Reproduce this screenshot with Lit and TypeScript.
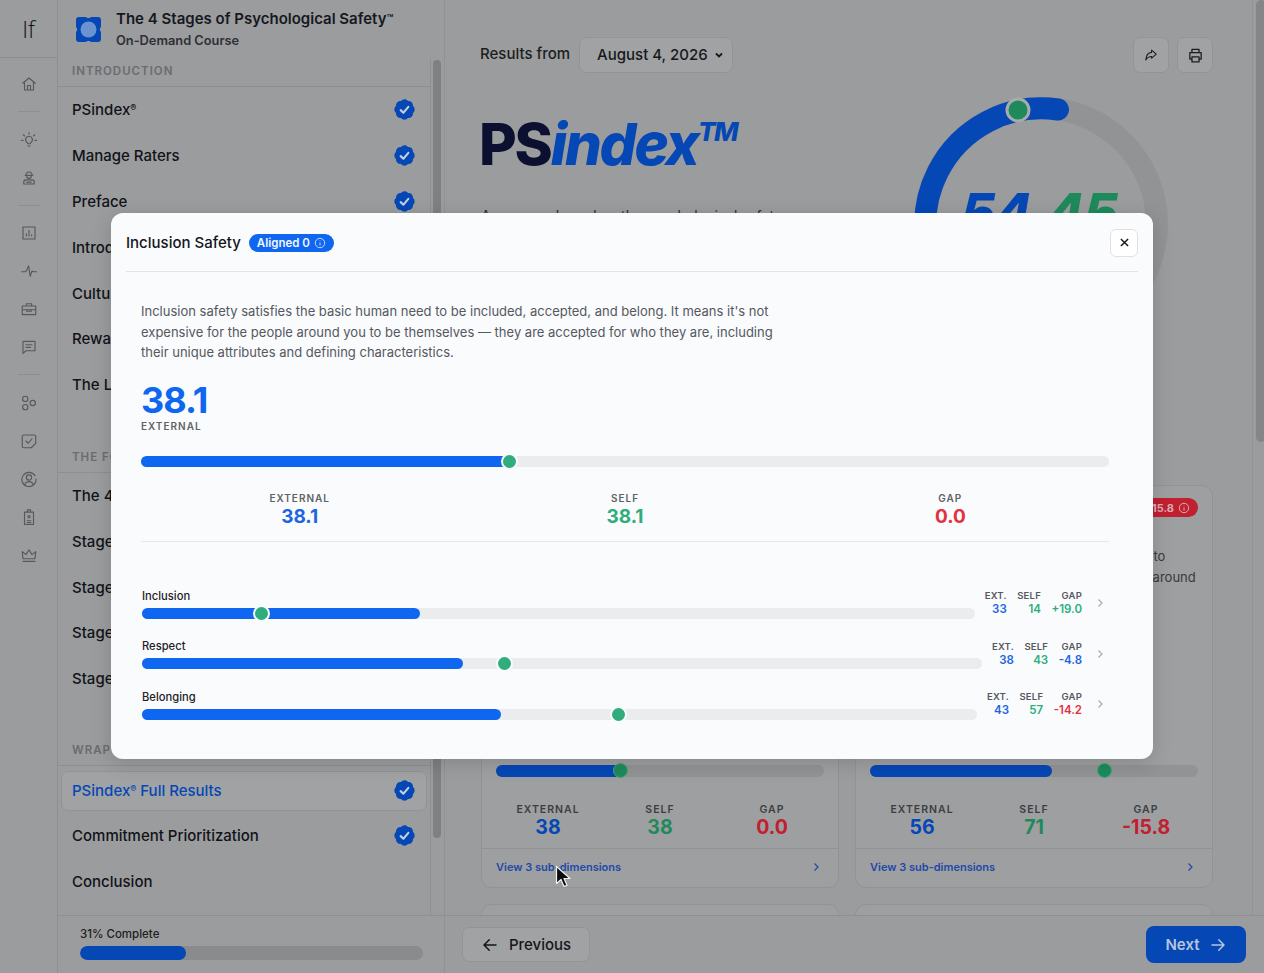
import { LitElement, html, css } from "lit";
import { customElement } from "lit/decorators.js";

const check = html`<svg class="check" viewBox="0 0 24 24"><path fill="#0547b5" d="M8.603 3.799A4.49 4.49 0 0 1 12 2.25c1.357 0 2.573.6 3.397 1.549a4.49 4.49 0 0 1 3.498 1.307 4.491 4.491 0 0 1 1.307 3.497A4.49 4.49 0 0 1 21.75 12a4.49 4.49 0 0 1-1.549 3.397 4.491 4.491 0 0 1-1.307 3.497 4.491 4.491 0 0 1-3.497 1.307A4.49 4.49 0 0 1 12 21.75a4.49 4.49 0 0 1-3.397-1.549 4.49 4.49 0 0 1-3.498-1.306 4.491 4.491 0 0 1-1.307-3.498A4.49 4.49 0 0 1 2.25 12c0-1.357.6-2.573 1.549-3.397a4.49 4.49 0 0 1 1.307-3.497 4.49 4.49 0 0 1 3.497-1.307Z"/><path fill="none" stroke="#c4cfe0" stroke-width="2" stroke-linecap="round" stroke-linejoin="round" d="M8.3 12.6l2.6 2.5 4.8-5.6"/></svg>`;

const railIcons: Record<string, string> = {
  home: "M3.5 11 12 4l8.5 7M6 9.5V20h12V9.5M10 20v-6h4v6",
  bulb: "M12 7a4.5 4.5 0 0 0-2.6 8.2c.6.5.9 1 .9 1.8h3.4c0-.8.3-1.300.9-1.800A4.500 4.500 0 0 0 12 7zM10.500 20h3M12 2v2M4.500 5l1.500 1.500M19.500 5 18 6.500M2 12.500h2M20 12.500h2",
  hat: "M8 8.500c0-2.500 1.800-4.500 4-4.500s4 2 4 4.500M7 8.500h10M9 9c0 2 1.300 3.500 3 3.500s3-1.500 3-3.500M5 20v-2.500c0-1.500 1.500-3 3-3h8c1.500 0 3 1.500 3 3V20zM9 17.500h6",
  chart: "M4 4h16v16H4zM8.500 16v-3M12 16V8.500M15.500 16v-1.500",
  pulse: "M2 13h5l2-2 2.500-6 2 14 2.500-7 1.500 1H22",
  brief: "M3 8h18v11.500H3zM8.500 8V5h7v3M3 13h18M9 13v2h6v-2",
  msg: "M4 4.500h16v12.500H8l-4 3.500zM8 9h8M8 12.500h6",
  shapes: "M10.500 6.500a3.500 3.500 0 1 1-7 0 3.500 3.500 0 0 1 7 0zM10.500 17.500a3.500 3.500 0 1 1-7 0 3.500 3.500 0 0 1 7 0zM20.500 12a3.500 3.500 0 1 1-7 0 3.500 3.500 0 0 1 7 0z",
  task: "M5 4h14a2 2 0 0 1 2 2v9l-6 6H5a2 2 0 0 1-2-2V6a2 2 0 0 1 2-2zM8 12l3 3 5-6",
  user: "M20 7.500A9.500 9.500 0 1 0 21.500 12M15.500 10a3.500 3.500 0 1 1-7 0 3.500 3.500 0 0 1 7 0zM6.500 19c1-2.500 3-3.500 5.500-3.500s4.500 1 5.500 3.500",
  badge: "M6 5.500h12V22H6zM10 5.500V2.500h4v3M12 10a1.500 1.500 0 1 0 0 3 1.500 1.500 0 0 0 0-3zM9.500 17h5M9.500 19.500h5",
  crown: "M4 17 3 7.500l5 4 4-6.500 4 6.500 5-4-1 9.500zM4 20.500h16",
};

const ic = (n: string) => html`<svg class="ri" viewBox="0 0 24 24"><path d=${railIcons[n]}/></svg>`;
const chev = html`<svg class="chev" viewBox="0 0 10 10"><path d="M3.500 1.500 7 5 3.500 8.500"/></svg>`;
const info = html`<svg class="info" viewBox="0 0 12 12"><circle cx="6" cy="6" r="4.700"/><path d="M6 5.500v3M6 3.400v.5"/></svg>`;
const reg = html`<span class="reg">®</span>`;

const items = (list: unknown[], done: number) =>
  list.map((t, i) => html`<div class="item"><span>${t}</span>${i < done ? check : ""}</div>`);

@customElement("app-root")
export class AppRoot extends LitElement {
  static styles = css`
    :host { display: block; width: 1264px; height: 973px; overflow: hidden; position: relative; background: #9b9c9d; font-family: Inter, "Liberation Sans", sans-serif; color: #14161c; }
    .app { display: flex; width: 100%; height: 100%; }
    .rail { width: 58px; flex: none; border-right: 1px solid #8e8f90; box-sizing: border-box; display: flex; flex-direction: column; align-items: center; }
    .logo { height: 58px; width: 100%; box-sizing: border-box; border-bottom: 1px solid #8e8f90; display: flex; align-items: center; justify-content: center; font-size: 23px; font-weight: 300; color: #111318; font-family: "Open Sans", sans-serif; margin-bottom: 7px; }
    .rbtn { height: 38px; flex: none; display: flex; align-items: center; justify-content: center; }
    .ri { width: 18px; height: 18px; fill: none; stroke: #55585c; stroke-width: 1.500; stroke-linejoin: round; stroke-linecap: round; }
    .rsep { width: 22px; height: 1px; background: #8e8f90; margin: 8px 0 8.500px; flex: none; }

    .side { width: 386px; flex: none; display: flex; flex-direction: column; height: 100%; }
    .sidetop { height: 59px; flex: none; display: flex; align-items: center; padding-left: 18px; gap: 15px; }
    .clogo { width: 25px; height: 25px; flex: none; }
    .ctitle { font-size: 15px; font-weight: 600; line-height: 20px; margin-top: -3px; color: #16181f; white-space: nowrap; }
    .tm { font-size: 11px; vertical-align: 2px; }
    .csub { font-size: 12.800px; font-weight: 600; line-height: 16px; margin-top: 4px; color: #2e3035; }
    .reg { font-size: 9px; vertical-align: 4px; line-height: 0; }
    .sidemid { flex: 1; display: flex; min-height: 0; }
    .list { width: 372px; flex: none; border-right: 1px solid #8e8f90; overflow: hidden; }
    .gutter { flex: 1; padding: 1px 3px 0 2px; }
    .sthumb { height: 778px; background: #7f8081; border-radius: 4px; }
    .sec { height: 28px; box-sizing: border-box; border-bottom: 1px solid #8e8f90; padding-left: 14px; font-size: 11.500px; font-weight: 600; letter-spacing: 1px; color: #6a6c70; line-height: 24px; }
    .group { margin-bottom: 37px; }
    .group + .group { margin-bottom: 36px; }
    .item { height: 45.800px; display: flex; align-items: center; justify-content: space-between; padding: 0 14px; font-size: 15px; font-weight: 500; color: #111319; box-sizing: border-box; }
    .activewrap { margin: 5px 3px 2.500px; padding: 0 10px; height: 40px; border: 1px solid #929394; background: #a1a2a3; border-radius: 7px; box-sizing: border-box; display: flex; align-items: center; justify-content: space-between; font-size: 15px; font-weight: 500; color: #0547b5; }
    .check { width: 25px; height: 25px; flex: none; margin-right: -1px; }
    .sidefoot { height: 58px; flex: none; border-top: 1px solid #8e8f90; box-sizing: border-box; padding: 10px 21px 0 22px; }
    .pl { font-size: 11.500px; font-weight: 500; color: #1c1e23; line-height: 16px; }
    .ptrack { height: 14px; margin-top: 4px; border-radius: 7px; background: #8a8b8c; overflow: hidden; }
    .pfill { height: 100%; width: 31%; background: #0547b5; border-radius: 7px; }

    .main { flex: 1; display: flex; flex-direction: column; border-left: 1px solid #919293; box-sizing: border-box; min-width: 0; }
    .mid { flex: 1; display: flex; min-height: 0; }
    .scroll { width: 807px; flex: none; padding: 37px 39px 0 36px; box-sizing: border-box; overflow: hidden; }
    .mgut { flex: 1; padding-left: 1px; border-left: 1px solid #939495; }
    .mthumb { width: 10px; height: 442px; background: #858687; border-radius: 5px; margin-left: 2px; }
    .head { display: flex; align-items: center; height: 36px; }
    .rf { font-size: 15px; font-weight: 500; color: #1b1d22; margin: -4px 9px 0 -1px; white-space: nowrap; }
    .sel { display: flex; align-items: center; width: 154px; height: 36px; box-sizing: border-box; padding: 0 8px 2px 17px; justify-content: space-between; font-size: 15px; font-weight: 500; border: 1px solid #939495; background: #a1a2a3; border-radius: 7px; color: #16181d; white-space: nowrap; }
    .sel svg { width: 10px; height: 10px; fill: none; stroke: #16181d; stroke-width: 1.800; margin-top: 2px; }
    .spacer { flex: 1; }
    .ibtn { width: 36px; height: 36px; box-sizing: border-box; border: 1px solid #939495; background: #a1a2a3; border-radius: 7px; margin-left: 8px; display: flex; align-items: center; justify-content: center; }
    .ibtn svg { width: 17px; height: 17px; fill: none; stroke: #1a1c20; stroke-width: 1.800; stroke-linejoin: round; stroke-linecap: round; }
    .ibtn svg.sm { width: 14px; height: 14px; }
    .hero { height: 412px; position: relative; }
    .brand { margin: 0 0 0 -2px; padding-top: 36px; font-size: 58px; line-height: 70px; font-weight: 800; letter-spacing: -2.200px; color: #0b1030; white-space: nowrap; }
    .brand i { color: #0547b5; font-weight: 800; }
    .brand sup { font-size: 26px; line-height: 0; font-style: italic; font-weight: 800; color: #0547b5; vertical-align: 24px; letter-spacing: -1.500px; }
    .lede { font-size: 14px; color: #2a2c30; margin: 27px 0 0 0; line-height: 20px; width: 310px; }
    .gauge { position: absolute; left: 430px; top: 21px; width: 260px; height: 260px; }
    .gauge svg { width: 260px; height: 260px; display: block; }
    .gnum { position: absolute; left: -2px; width: 100%; top: 89px; text-align: center; font-size: 54px; line-height: 60px; font-weight: 800; font-style: italic; letter-spacing: -1px; }
    .gnum b { color: #0547b5; font-weight: 800; }
    .gnum u { color: #1e8a5c; text-decoration: none; }
    .cards { display: grid; grid-template-columns: 358px 358px; gap: 16px; }
    .card { height: 403px; box-sizing: border-box; border: 1px solid #929394; border-radius: 11px; display: flex; flex-direction: column; background: #9e9fa0; }
    .chead { height: 60px; flex: none; display: flex; justify-content: flex-end; align-items: flex-start; padding: 12px 14px 0; box-sizing: border-box; }
    .cbadge { display: flex; align-items: center; gap: 4px; height: 19px; border-radius: 10px; background: #c0202f; color: #d9aeb3; font-size: 11px; font-weight: 700; padding: 0 8px; white-space: nowrap; }
    .cbadge .info { stroke: #d9aeb3; }
    .cbody { font-size: 13px; line-height: 20.500px; color: #383a3e; padding: 0 14px; white-space: nowrap; }
    .cgrow { flex: 1; }
    .cbar { position: relative; height: 12px; background: #929394; border-radius: 6px; margin: 0 14px; }
    .cfill { height: 100%; background: #0547b5; border-radius: 6px; }
    .cdot { position: absolute; top: 50%; width: 13px; height: 13px; margin: -8px 0 0 -8px; border: 1.500px solid #4aa57f; border-radius: 50%; background: #1e8a5c; }
    .cstats { display: grid; grid-template-columns: repeat(3, 1fr); text-align: center; margin: 27px 10px 10px; }
    .cstats label { display: block; font-size: 10.500px; font-weight: 600; letter-spacing: 1px; color: #3c3e42; line-height: 12px; }
    .cstats div div { font-size: 19.500px; font-weight: 700; line-height: 22px; }
    .b { color: #0547b5; } .g { color: #1e8a5c; } .r { color: #c0202f; }
    .cfoot { border-top: 1px solid #919293; height: 39px; box-sizing: border-box; display: flex; align-items: center; justify-content: space-between; padding: 0 17px 2px 14px; font-size: 11px; font-weight: 600; color: #1f4aa8; }
    .cfoot .chev { stroke: #1f4aa8; }
    .mfoot { height: 58px; flex: none; border-top: 1px solid #8e8f90; box-sizing: border-box; display: flex; align-items: center; justify-content: space-between; padding: 0 18px 0 17px; }
    .prev { height: 35px; width: 128px; box-sizing: border-box; border: 1px solid #939495; background: #a1a2a3; border-radius: 7px; display: flex; align-items: center; justify-content: center; gap: 10px; font-size: 15px; font-weight: 500; color: #14161c; }
    .next { height: 37px; width: 100px; box-sizing: border-box; background: #0547b5; border-radius: 8px; display: flex; align-items: center; justify-content: center; gap: 9px; font-size: 15px; font-weight: 600; color: #b6c5dd; }
    .prev svg, .next svg { width: 18px; height: 18px; fill: none; stroke: currentColor; stroke-width: 2; stroke-linecap: round; stroke-linejoin: round; }

    .modal { position: absolute; left: 111px; top: 213px; width: 1042px; height: 546px; box-sizing: border-box; padding: 0 15px; background: #f9fbfd; border-radius: 12px; box-shadow: 0 4px 20px rgba(0,0,0,.15); display: flex; flex-direction: column; }
    .mhead { height: 59px; flex: none; box-sizing: border-box; border-bottom: 1px solid #e2e4e8; display: flex; align-items: center; gap: 8px; padding-top: 1px; }
    .mtitle { font-size: 15px; font-weight: 500; color: #14161c; }
    .mbadge { height: 18px; display: flex; align-items: center; gap: 4px; padding: 0 8px; border-radius: 9px; background: #0f66f0; color: #f2f6fe; font-size: 11.500px; font-weight: 600; }
    .info { width: 12px; height: 12px; fill: none; stroke: #c3d8fb; stroke-width: 1; flex: none; }
    .close { margin-left: auto; width: 28px; height: 28px; box-sizing: border-box; border: 1px solid #dfe1e5; border-radius: 6px; background: #fff; display: flex; align-items: center; justify-content: center; }
    .close svg { width: 9px; height: 9px; stroke: #14161c; stroke-width: 1.600; fill: none; }
    .mbody { padding: 0 29px 0 15px; flex: 1; min-height: 0; }
    .desc { margin: 29px 0 0; width: 645px; font-size: 13px; line-height: 20.500px; color: #55585d; }
    .big { font-size: 36px; line-height: 40px; font-weight: 700; color: #0f66f0; margin-top: 17.500px; letter-spacing: -1px; }
    .biglab { font-size: 10px; font-weight: 600; letter-spacing: 1px; color: #606266; line-height: 13px; }
    .bar { position: relative; height: 11px; border-radius: 6px; background: #ebecee; }
    .bar.mainbar { margin-top: 23px; }
    .fill { height: 100%; border-radius: 6px; background: #0f66f0; }
    .dot { position: absolute; top: 50%; width: 13px; height: 13px; margin: -8.500px 0 0 -8.500px; border-radius: 50%; background: #2fad7c; border: 2px solid #f9fbfd; }
    .stats { display: grid; grid-template-columns: repeat(3, 1fr); gap: 8px; text-align: center; margin-top: 25px; padding-bottom: 13px; border-bottom: 1px solid #e6e7ea; }
    .stats label { display: block; font-size: 10px; font-weight: 600; letter-spacing: 1px; color: #606266; line-height: 13px; }
    .stats div div { font-size: 19px; font-weight: 700; line-height: 23px; }
    .mb { color: #1e66e0; } .mg { color: #2fad7c; } .mr { color: #e3323f; }
    .subs { margin-top: 41px; display: flex; flex-direction: column; gap: 10.500px; padding: 0 4px 0 1px; }
    .sub { display: flex; align-items: center; height: 40.200px; }
    .subl { flex: 1; min-width: 0; }
    .subn { font-size: 11.200px; font-weight: 500; line-height: 16px; color: #1f2126; margin-bottom: 4px; }
    .sstats { display: flex; gap: 10.500px; margin-left: 10px; text-align: right; }
    .sstats label { display: block; font-size: 9.500px; font-weight: 600; color: #55585d; line-height: 13px; letter-spacing: 0.2px; }
    .sstats div div { font-size: 11.500px; font-weight: 600; line-height: 15px; }
    .chev { width: 10px; height: 10px; fill: none; stroke: #a9abaf; stroke-width: 1.200; flex: none; }
    .sub > .chev { margin-left: 13px; }
    .cursor { position: absolute; left: 555px; top: 865px; width: 16px; height: 24px; }
  `;

  sub(name: string, ext: number, self: number, gap: string, gc: string, fp: number, dp: number) {
    return html`<div class="sub">
      <div class="subl">
        <div class="subn">${name}</div>
        <div class="bar"><div class="fill" style="width:${fp}%"></div><div class="dot" style="left:${dp}%"></div></div>
      </div>
      <div class="sstats">
        <div><label>EXT.</label><div class="mb">${ext}</div></div>
        <div><label>SELF</label><div class="mg">${self}</div></div>
        <div><label>GAP</label><div class=${gc}>${gap}</div></div>
      </div>
      ${chev}
    </div>`;
  }

  card(ext: string, self: string, gap: string, fp: number, dp: number, badge: boolean) {
    return html`<div class="card">
      <div class="chead">${badge ? html`<div class="cbadge">Misaligned -15.8 ${info}</div>` : html`<div></div>`}</div>
      <div class="cbody">${badge ? html`Contribution safety fits the basic human need to<br />contribute and make a difference for all those around` : ""}</div>
      <div class="cgrow"></div>
      <div class="cbar"><div class="cfill" style="width:${fp}%"></div><div class="cdot" style="left:${dp}%"></div></div>
      <div class="cstats">
        <div><label>EXTERNAL</label><div class="b">${ext}</div></div>
        <div><label>SELF</label><div class="g">${self}</div></div>
        <div><label>GAP</label><div class="r">${gap}</div></div>
      </div>
      <div class="cfoot"><span>View 3 sub-dimensions</span>${chev}</div>
    </div>`;
  }

  render() {
    return html`
      <div class="app">
        <nav class="rail">
          <div class="logo">If</div>
          <div class="rbtn">${ic("home")}</div>
          <div class="rsep"></div>
          <div class="rbtn">${ic("bulb")}</div>
          <div class="rbtn">${ic("hat")}</div>
          <div class="rsep"></div>
          <div class="rbtn">${ic("chart")}</div>
          <div class="rbtn">${ic("pulse")}</div>
          <div class="rbtn">${ic("brief")}</div>
          <div class="rbtn">${ic("msg")}</div>
          <div class="rsep"></div>
          <div class="rbtn">${ic("shapes")}</div>
          <div class="rbtn">${ic("task")}</div>
          <div class="rbtn">${ic("user")}</div>
          <div class="rbtn">${ic("badge")}</div>
          <div class="rbtn">${ic("crown")}</div>
        </nav>

        <aside class="side">
          <div class="sidetop">
            <svg class="clogo" viewBox="0 0 25 25">
              <rect x="0" y="0" width="12" height="12" rx="3" fill="#0547b5"/><rect x="13" y="0" width="12" height="12" rx="3" fill="#0547b5"/>
              <rect x="0" y="13" width="12" height="12" rx="3" fill="#0547b5"/><rect x="13" y="13" width="12" height="12" rx="3" fill="#0547b5"/>
              <circle cx="12.500" cy="12.500" r="11.500" fill="#0547b5"/><circle cx="12.500" cy="12.500" r="8" fill="#6a93cf"/>
            </svg>
            <div>
              <div class="ctitle">The 4 Stages of Psychological Safety<span class="tm">™</span></div>
              <div class="csub">On-Demand Course</div>
            </div>
          </div>
          <div class="sidemid">
            <div class="list">
              <div class="group">
                <div class="sec">INTRODUCTION</div>
                ${items([html`PSindex${reg}`, "Manage Raters", "Preface", "Introduction", "Culture", "Rewards", "The Leader"], 3)}
              </div>
              <div class="group">
                <div class="sec">THE FOUR STAGES</div>
                ${items(["The 4 Stages", "Stage 1", "Stage 2", "Stage 3", "Stage 4"], 0)}
              </div>
              <div class="sec">WRAP UP</div>
              <div class="activewrap"><span>PSindex${reg} Full Results</span>${check}</div>
              ${items(["Commitment Prioritization"], 1)}
              ${items(["Conclusion"], 0)}
            </div>
            <div class="gutter"><div class="sthumb"></div></div>
          </div>
          <div class="sidefoot">
            <div class="pl">31% Complete</div>
            <div class="ptrack"><div class="pfill"></div></div>
          </div>
        </aside>

        <main class="main">
          <div class="mid">
            <div class="scroll">
              <div class="head">
                <span class="rf">Results from</span>
                <div class="sel">August 4, 2026 <svg viewBox="0 0 10 10"><path d="M2 3.500 5 6.500 8 3.500"/></svg></div>
                <div class="spacer"></div>
                <div class="ibtn"><svg class="sm" viewBox="0 0 24 24"><path d="M21 10.500 13 3.500v4C7 8 3.500 13 3 20.500c2.500-4 5.500-6 10-6v3z"/></svg></div>
                <div class="ibtn"><svg viewBox="0 0 24 24"><path d="M7 8V3.500h10V8M7 17H4v-9h16v9h-3M7 14h10v7H7z"/></svg></div>
              </div>
              <div class="hero">
                <h1 class="brand">PS<i>index</i><sup>TM</sup></h1>
                <p class="lede">A measure based on the psychological safety</p>
                <div class="gauge">
                  <svg viewBox="0 0 260 260">
                    <path d="M48 212A116 116 0 1 1 212 212" fill="none" stroke="#929394" stroke-width="22" stroke-linecap="round"/>
                    <path d="M48 212A116 116 0 0 1 147 15.500" fill="none" stroke="#0547b5" stroke-width="22" stroke-linecap="round"/>
                    <circle cx="107" cy="16" r="11" fill="#1e8a5c" stroke="#a9abab" stroke-width="3"/>
                  </svg>
                  <div class="gnum"><b>54</b><u>.45</u></div>
                </div>
              </div>
              <div class="cards">
                ${this.card("38", "38", "0.0", 38, 38, false)}
                ${this.card("56", "71", "-15.8", 55.5, 71.5, true)}
                <div class="card"></div>
                <div class="card"></div>
              </div>
            </div>
            <div class="mgut"><div class="mthumb"></div></div>
          </div>
          <div class="mfoot">
            <div class="prev"><svg viewBox="0 0 24 24"><path d="M20 12H4M11 5l-7 7 7 7"/></svg>Previous</div>
            <div class="next">Next<svg viewBox="0 0 24 24"><path d="M4 12h16M13 5l7 7-7 7"/></svg></div>
          </div>
        </main>
      </div>

      <section class="modal">
        <header class="mhead">
          <span class="mtitle">Inclusion Safety</span>
          <span class="mbadge">Aligned 0 ${info}</span>
          <div class="close"><svg viewBox="0 0 10 10"><path d="M1 1l8 8M9 1l-8 8"/></svg></div>
        </header>
        <div class="mbody">
          <p class="desc">Inclusion safety satisfies the basic human need to be included, accepted, and belong. It means it's not expensive for the people around you to be themselves — they are accepted for who they are, including their unique attributes and defining characteristics.</p>
          <div class="big">38.1</div>
          <div class="biglab">EXTERNAL</div>
          <div class="bar mainbar"><div class="fill" style="width:38%"></div><div class="dot" style="left:38.1%"></div></div>
          <div class="stats">
            <div><label>EXTERNAL</label><div class="mb">38.1</div></div>
            <div><label>SELF</label><div class="mg">38.1</div></div>
            <div><label>GAP</label><div class="mr">0.0</div></div>
          </div>
          <div class="subs">
            ${this.sub("Inclusion", 33, 14, "+19.0", "mg", 33.4, 14.3)}
            ${this.sub("Respect", 38, 43, "-4.8", "mb", 38.2, 43.1)}
            ${this.sub("Belonging", 43, 57, "-14.2", "mr", 43, 57.1)}
          </div>
        </div>
      </section>

      <svg class="cursor" viewBox="0 0 16 24">
        <path d="M1.500 1.500v17l4.500-4 3 7 3-1.300-3-6.700h6z" fill="#0c0c0e" stroke="#f2f2f2" stroke-width="1.200" stroke-linejoin="round"/>
      </svg>
    `;
  }
}
